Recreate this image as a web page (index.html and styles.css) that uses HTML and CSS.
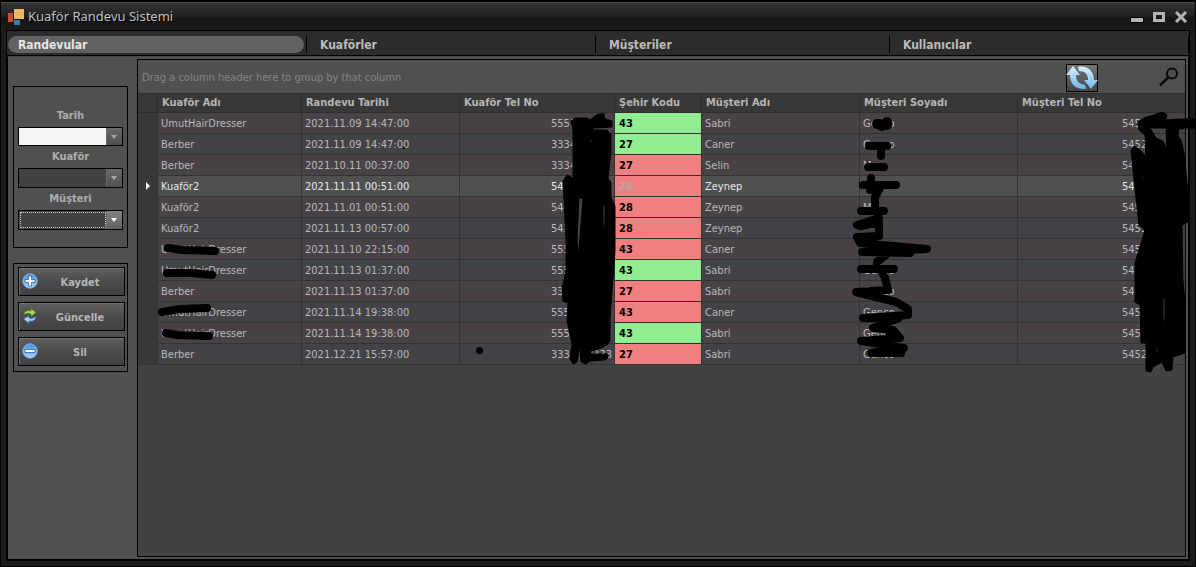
FILE: index.html
```html
<!DOCTYPE html>
<html lang="tr">
<head>
<meta charset="utf-8">
<title>Kuaför Randevu Sistemi</title>
<link rel="stylesheet" href="styles.css">
</head>
<body>
<div class="window">
  <header class="titlebar">
    <svg class="logo" width="18" height="18" viewBox="0 0 18 18" aria-hidden="true"><path fill="#d04a2c" d="M0 4h5v9H0z"/><path fill="#efb562" d="M6 0h10v10H6z"/><path fill="#3b78b4" d="M6 11h6v5H6z"/></svg>
    <h1 class="title">Kuaför Randevu Sistemi</h1>
    <div class="caption-buttons">
      <button class="caption" aria-label="Simge durumuna küçült"><svg width="14" height="14" viewBox="0 0 14 14"><path fill="#b4b4b4" stroke="#000" stroke-width="1" d="M.5 7.500h13v5H.5z"/></svg></button>
      <button class="caption" aria-label="Ekranı kapla"><svg width="14" height="14" viewBox="0 0 14 14"><path fill="none" stroke="#b4b4b4" stroke-width="3" d="M2.500 3.500h9v7h-9z"/></svg></button>
      <button class="caption" aria-label="Kapat"><svg width="14" height="14" viewBox="0 0 14 14"><path fill="none" stroke="#b4b4b4" stroke-width="3" d="M2 2l10 10M12 2L2 12"/></svg></button>
    </div>
  </header>

  <div class="frame">
    <nav class="tabs">
      <a class="tab tab-active" href="#randevular">Randevular</a>
      <a class="tab" href="#kuaforler">Kuaförler</a>
      <a class="tab" href="#musteriler">Müşteriler</a>
      <a class="tab" href="#kullanicilar">Kullanıcılar</a>
    </nav>

    <div class="content">
      <aside class="sidebar">
        <form class="group fields">
          <label class="label" for="tarih">Tarih</label>
          <div class="combo combo-date"><input class="control" id="tarih" type="text"></div>
          <label class="label" for="kuafor">Kuaför</label>
          <div class="combo"><select class="control" id="kuafor"><option></option></select></div>
          <label class="label" for="musteri">Müşteri</label>
          <div class="combo combo-focus"><select class="control" id="musteri"><option></option></select></div>
        </form>
        <div class="group actions">
          <button class="action">
            <svg width="16" height="16" viewBox="0 0 16 16" aria-hidden="true"><defs><linearGradient id="blue" x2="0" y2="1"><stop stop-color="#4e91d9"/><stop offset="1" stop-color="#9bd5ff"/></linearGradient></defs><circle cx="8" cy="8" r="7.200" fill="url(#blue)" stroke="#82b5e5"/><path d="M6.500 3h3v3.500H13v3H9.500V13h-3V9.500H3v-3h3.500z" fill="#fff" stroke="#315f9c" stroke-width=".8"/></svg>
            <span>Kaydet</span>
          </button>
          <button class="action">
            <svg width="16" height="16" viewBox="0 0 16 16" aria-hidden="true"><path d="M2 7c0-4 3-5 7-4V.5l5 4-5 4V6C6 5 4 5 2 7z" fill="#a8d95b" stroke="#57791f" stroke-width=".7"/><path d="M14 8c0 4-3 6-7 5v2.500l-5.500-4.500L7 7.500V10c3 1 5 0 7-2z" fill="#9ed0f7" stroke="#3d6999" stroke-width=".7"/></svg>
            <span>Güncelle</span>
          </button>
          <button class="action">
            <svg width="16" height="16" viewBox="0 0 16 16" aria-hidden="true"><circle cx="8" cy="8" r="7.200" fill="url(#blue)" stroke="#82b5e5"/><path d="M3 6.500h10v3H3z" fill="#fff" stroke="#315f9c" stroke-width=".8"/></svg>
            <span>Sil</span>
          </button>
        </div>
      </aside>

      <main class="grid">
        <div class="groupbar">
          <span class="hint">Drag a column header here to group by that column</span>
          <button class="refresh" aria-label="Yenile"><svg width="32" height="28" viewBox="0 0 32 28"><defs><linearGradient id="ice" x2="0" y2="1"><stop stop-color="#d9f3ff"/><stop offset="1" stop-color="#6eb4ec"/></linearGradient></defs><path d="M0 11L7 2l7 9h-4c0 6 3 9 9 10l1 4C10 26 4 20 4 11z" fill="url(#ice)"/><path d="M32 16l-7 9-7-9h4c0-6-3-9-9-9l-1-4c9-2 16 4 16 13z" fill="url(#ice)"/></svg></button>
          <button class="search" aria-label="Ara"><svg width="20" height="20" viewBox="0 0 20 20"><circle cx="13" cy="6.500" r="5" fill="none" stroke="#0a0a0a" stroke-width="2"/><path d="M9.500 10L1 18.500" stroke="#0a0a0a" stroke-width="2.500"/></svg></button>
        </div>
        <table class="table">
          <colgroup><col class="c-mark"><col class="c-name"><col class="c-wide"><col class="c-tel"><col class="c-code"><col class="c-wide"><col class="c-wide"><col class="c-last"></colgroup>
          <thead><tr><th></th><th>Kuaför Adı</th><th>Randevu Tarihi</th><th>Kuaför Tel No</th><th>Şehir Kodu</th><th>Müşteri Adı</th><th>Müşteri Soyadı</th><th>Müşteri Tel No</th></tr></thead>
          <tbody>
            <tr><td></td><td>UmutHairDresser</td><td>2021.11.09 14:47:00</td><td><span class="num">5553</span></td><td class="code green">43</td><td>Sabri</td><td>Genco</td><td><span class="num">545</span></td></tr>
            <tr><td></td><td>Berber</td><td>2021.11.09 14:47:00</td><td><span class="num">3334</span></td><td class="code green">27</td><td>Caner</td><td>Genco</td><td><span class="num">5452</span></td></tr>
            <tr><td></td><td>Berber</td><td>2021.10.11 00:37:00</td><td><span class="num">3334</span></td><td class="code red">27</td><td>Selin</td><td>M</td><td><span class="num">545</span></td></tr>
            <tr class="selected"><td class="mark"></td><td>Kuaför2</td><td>2021.11.11 00:51:00</td><td><span class="num">543</span></td><td class="code red">28</td><td>Zeynep</td><td></td><td><span class="num">545</span></td></tr>
            <tr><td></td><td>Kuaför2</td><td>2021.11.01 00:51:00</td><td><span class="num">543</span></td><td class="code red">28</td><td>Zeynep</td><td>M</td><td><span class="num">545</span></td></tr>
            <tr><td></td><td>Kuaför2</td><td>2021.11.13 00:57:00</td><td><span class="num">543</span></td><td class="code red">28</td><td>Zeynep</td><td></td><td><span class="num">5453</span></td></tr>
            <tr><td></td><td>UmutHairDresser</td><td>2021.11.10 22:15:00</td><td><span class="num">555</span></td><td class="code red">43</td><td>Caner</td><td></td><td><span class="num">545</span></td></tr>
            <tr><td></td><td>UmutHairDresser</td><td>2021.11.13 01:37:00</td><td><span class="num">555</span></td><td class="code green">43</td><td>Sabri</td><td>Genco</td><td><span class="num">545</span></td></tr>
            <tr><td></td><td>Berber</td><td>2021.11.13 01:37:00</td><td><span class="num">333</span></td><td class="code red">27</td><td>Sabri</td><td>Genco</td><td><span class="num">545</span></td></tr>
            <tr><td></td><td>UmutHairDresser</td><td>2021.11.14 19:38:00</td><td><span class="num">555</span></td><td class="code red">43</td><td>Caner</td><td>Genco</td><td><span class="num">545</span></td></tr>
            <tr><td></td><td>UmutHairDresser</td><td>2021.11.14 19:38:00</td><td><span class="num">555</span></td><td class="code green">43</td><td>Sabri</td><td>Genco</td><td><span class="num">545</span></td></tr>
            <tr><td></td><td>Berber</td><td>2021.12.21 15:57:00</td><td><span class="num"><span>333</span><span>3333</span></span></td><td class="code red">27</td><td>Sabri</td><td>Genco</td><td><span class="num">5452</span></td></tr>
          </tbody>
        </table>
      </main>
    </div>
  </div>

  <!-- Freehand redaction strokes -->
  <svg class="redaction" width="1196" height="567" viewBox="0 0 1196 567" aria-hidden="true">
    <g fill="none" stroke="#000" stroke-width="8" stroke-linecap="round" stroke-linejoin="round">
      <path d="M168 248l14 2 33 1M167 273l23 0 22 2M162 312l18-3 27-1M166 333l11 2 32 1"/>
      <path stroke-width="10" d="M877 124l2 0M882 126l5-3M887 122v3"/>
      <path d="M869 146h18M881 149v7M868 167h16"/>
      <path d="M863 185h33M871 178l-1 12 10-2-5 9v10M861 211h23M877 213l2 5-22 7 4 1 18-4v14l-22 1 3 6 67 6-65 3 48 1M886 255l-9 7 0 4M861 269h33M881 270l4 8 3 12-32 2 40 10 12 7v6l-45 3 36 0-26 10 20 2 7 8-39 3 43 7-33 5h30M873 240l7 10M890 333v15"/>
    </g>
    <circle cx="479.500" cy="350.500" r="3.500"/><circle cx="404" cy="148" r="1"/>
    <path fill-rule="evenodd" stroke="#000" stroke-linejoin="round" d="M571 121l4-3h12l3 2 8-6h6l1 5 7 2v6l-19 1v2l14 0 4 4v19l-3 25 3 5v15l4 8v45l-2 27-3 40v23l-3 4-6 3-5 2-5 1v3h16l1 4-3 2-15 1-4 3-5-2-1-16-3 16-4 2-3-5 2-15-5-23 1-18-5-2-1-13 4-17v-30l-3-60 4-6 6 3v-47zM579 197l4 2-3 38-2 22-1-19zM603 205l2 1v25l-2-8zM590 140l3 0-2 3z"/>
    <path fill-rule="evenodd" stroke="#000" stroke-linejoin="round" d="M1138 122l6-4 19-6 4 3-1 4-13 2 26-2h17v9l-17 1-1 7 3 4 3 13 4 40v29l-6 3 1 55 2 23v50l-12 4-1 13-6 1-4-9-9 5-2 5-5-1v-28h-5l-1-38-5-3v-39l10-33-6-5-5-45-3-30 3-4 6 4 6 7-1-22-6-5zM1150 128l16 0 1 22-4-9-7-3zM1163 298l2 1v26l-2-8zM1142 173l1 4v6l-1-3zM1155 351l4-5-2 6z"/>
  </svg>
</div>
</body>
</html>
```
FILE: styles.css
```css
* { box-sizing: border-box; }
body {
  margin: 0;
  background: #000;
  color: #b8b8b8;
  font-family: "DejaVu Sans Condensed", Tahoma, sans-serif;
  font-size: 11px;
}
button, input, select { font: inherit; color: inherit; margin: 0; padding: 0; border: 0; border-radius: 0; }
.window {
  position: relative;
  display: flex;
  flex-direction: column;
  min-height: 100vh;
  overflow: hidden;
  padding: 0 5px 5px;
  background: #1b1b1b;
  border: 1px solid #000;
  border-top: 2px solid #000;
}
.titlebar {
  display: flex;
  align-items: center;
  height: 28px;
  margin: 0 -5px;
  padding: 0 7px;
  background: linear-gradient(#343434, #202020 50%, #151515 55%, #1b1b1b);
  border-top: 1px solid #4b4b4b;
}
.logo { margin-top: 2px; }
.title {
  flex: 1;
  margin: 0 0 1px 2px;
  font: 13px "Noto Sans", sans-serif;
  color: #c2c2c2;
  text-shadow: 1px 1px #000;
}
.caption-buttons { display: flex; gap: 8px; }
.caption { display: flex; background: none; }
.frame { flex: 1; display: flex; flex-direction: column; border: 1px solid #000; }
.tabs {
  display: grid;
  grid-template-columns: 299fr 289fr 294fr 299fr;
  height: 25px;
  padding: 5px 0 2px 1px;
  background: #2c2c2c;
  border-bottom: 1px solid #000;
  font-size: 12px;
  font-weight: bold;
}
.tab {
  display: flex;
  align-items: center;
  padding-left: 13px;
  border-right: 1px solid #000;
  color: #bcbcbc;
  text-decoration: none;
}
.tab-active { position: relative; padding-left: 10px; color: #e6e6e6; z-index: 0; }
.tab-active::before {
  content: "";
  position: absolute;
  z-index: -1;
  inset: 0 2px 0 0;
  border-radius: 9px;
  background: #626262;
}
.content {
  flex: 1;
  display: grid;
  grid-template-columns: 129px 1fr;
  padding: 2px 4px 2px 0;
  background: #505050;
  border: 1px solid #000;
  border-top-color: #444;
}
.sidebar { padding: 27px 9px 0 5px; }
.group { border: 1px solid #000; }
.fields { padding: 21px 4px 14px; }
.label {
  display: block;
  height: 15px;
  margin-bottom: 4px;
  line-height: 15px;
  font-weight: bold;
  text-align: center;
  color: #adadad;
}
.combo { position: relative; height: 20px; margin-bottom: 3px; border: 1px solid #000; background: #424242; }
.combo-date { height: 19px; background: #f5f5f5; }
.control { display: block; width: 100%; height: 100%; padding-right: 17px; appearance: none; background: none; outline: 0; }
.combo-date .control { color: #111; }
.combo::before {
  content: "";
  position: absolute;
  inset: 0 0 0 auto;
  width: 15px;
  background: linear-gradient(#686868, #505050);
  border-left: 1px solid #6a6a6a;
  pointer-events: none;
}
.combo::after {
  content: "";
  position: absolute;
  top: 7px;
  right: 5px;
  border: solid transparent;
  border-width: 4px 3px 0;
  border-top-color: #aaa;
  pointer-events: none;
}
.combo-focus::before { background: linear-gradient(#838383, #626262); }
.combo-focus::after { border-top-color: #fff; }
.combo-focus .control { width: calc(100% - 17px); height: 16px; margin: 1px; border: 1px dotted #ccc; }
.actions { display: grid; gap: 6px; margin-top: 15px; padding: 3px 2px 5px 4px; }
.action {
  display: flex;
  align-items: center;
  height: 29px;
  padding: 0 9px 0 3px;
  border: 1px solid #000;
  background: linear-gradient(#606060, #4b4b4b 50%, #414141);
  box-shadow: inset 1px 1px #707070;
  font-weight: bold;
  color: #b6b6b6;
}
.action svg { margin-bottom: 2px; }
.action span { flex: 1; padding: 2px 0 0 7px; text-align: center; white-space: nowrap; }
.grid { border: 1px solid #000; background: #424242; }
.groupbar { display: flex; align-items: center; height: 33px; padding: 0 6px 0 4px; background: #505050; }
.hint { flex: 1; padding-top: 2px; color: #858585; }
.refresh {
  display: flex;
  align-items: center;
  justify-content: center;
  width: 32px;
  height: 28px;
  margin: 3px 61px 0 0;
  border: 1px solid #000;
  background: linear-gradient(#787878, #444);
}
.refresh svg { flex: none; }
.search { display: flex; background: none; }
.table { width: 100%; table-layout: fixed; border-collapse: separate; border-spacing: 0; }
.c-mark { width: 20px; }
.c-name { width: 144px; }
.c-wide { width: 158px; }
.c-tel { width: 155px; }
.c-code { width: 87px; }
.c-last { width: 167px; }
th, td { padding: 0 0 0 3px; border-right: 1px solid #333; border-bottom: 1px solid #333; white-space: nowrap; }
th {
  height: 20px;
  padding: 0 0 2px 4px;
  border-color: #2e2e2e;
  border-top: 1px solid #2e2e2e;
  background: #383838;
  color: #b5b5b5;
  text-align: left;
}
th:last-child, td:last-child { border-right: 0; }
td { height: 21px; background: #434247; }
tbody tr:nth-child(odd) td { background: #484247; }
tbody .selected td { background: #505050; color: #e8e8e8; }
tbody tr td:first-child, tbody tr:nth-child(odd) td:first-child, tbody .selected td:first-child { background: #383838; border-bottom-color: #383838; }
.mark::before { content: ""; display: block; margin-left: 5px; width: 0; border: solid transparent; border-width: 4px 0 4px 4px; border-left-color: #fff; }
.num { display: flex; justify-content: space-between; width: 61px; margin-left: auto; margin-right: 2px; }
tbody tr .code { padding-left: 4px; font-weight: bold; color: #000; }
tbody .selected .code { color: #b0a8a8; }
tbody tr .green, tbody tr:nth-child(odd) .green { background: #90ee90; }
tbody tr .red, tbody tr:nth-child(odd) .red, tbody .selected .red { background: #f08080; }
.redaction { position: absolute; left: -1px; top: -2px; pointer-events: none; }
```
